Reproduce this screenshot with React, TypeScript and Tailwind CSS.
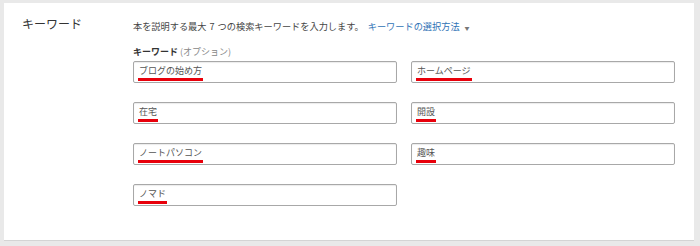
import React from "react";

const keywords = ["ブログの始め方", "ホームページ", "在宅", "開設", "ノートパソコン", "趣味", "ノマド"];

const jp = { fontFamily: '"Noto Sans CJK JP", "Liberation Sans", sans-serif' };

const KeywordBox = ({ value }: { value: string }) => (
  <div className="h-[22px] border border-[#a8a8a8] rounded-[2px] bg-white shadow-[inset_0_1px_1px_rgba(0,0,0,0.08)] pl-[4px] flex items-start">
    <span className="inline-block mt-[3px] pb-[2px] border-b-[3px] border-[#e8000b] text-[9px] leading-[11px] text-[#555] px-[1px]">
      {value}
    </span>
  </div>
);

export default function App() {
  return (
    <div className="w-[700px] h-[246px] bg-[#e9e9e9] pl-[4px] pt-[3px] pr-[6px] pb-[5px]" style={jp}>
      <div className="h-[238px] bg-white border-b border-[#d4d4d4] flex">
        <div className="w-[129px] pl-[18px] pt-[13px] text-[12px] leading-[16px] text-[#333]">キーワード</div>
        <div className="pt-[17px]">
          <p className="text-[9.2px] leading-[12px] text-[#444]">
            本を説明する最大<span className="mx-[3px]">7</span>つの検索キーワードを入力します。
            <span className="text-[#2f73b6] ml-[4px]">キーワードの選択方法</span>
            <span className="text-[#777] text-[5px] ml-[5px] align-middle">▼</span>
          </p>
          <div className="mt-[12px] text-[9px] leading-[12px]">
            <span className="font-bold text-[#333]">キーワード</span>
            <span className="text-[#888] ml-[2px]">(オプション)</span>
          </div>
          <div className="mt-[3px] grid grid-cols-[264px_264px] gap-x-[14px] gap-y-[19px]">
            {keywords.map((k) => (
              <KeywordBox key={k} value={k} />
            ))}
          </div>
        </div>
      </div>
    </div>
  );
}
